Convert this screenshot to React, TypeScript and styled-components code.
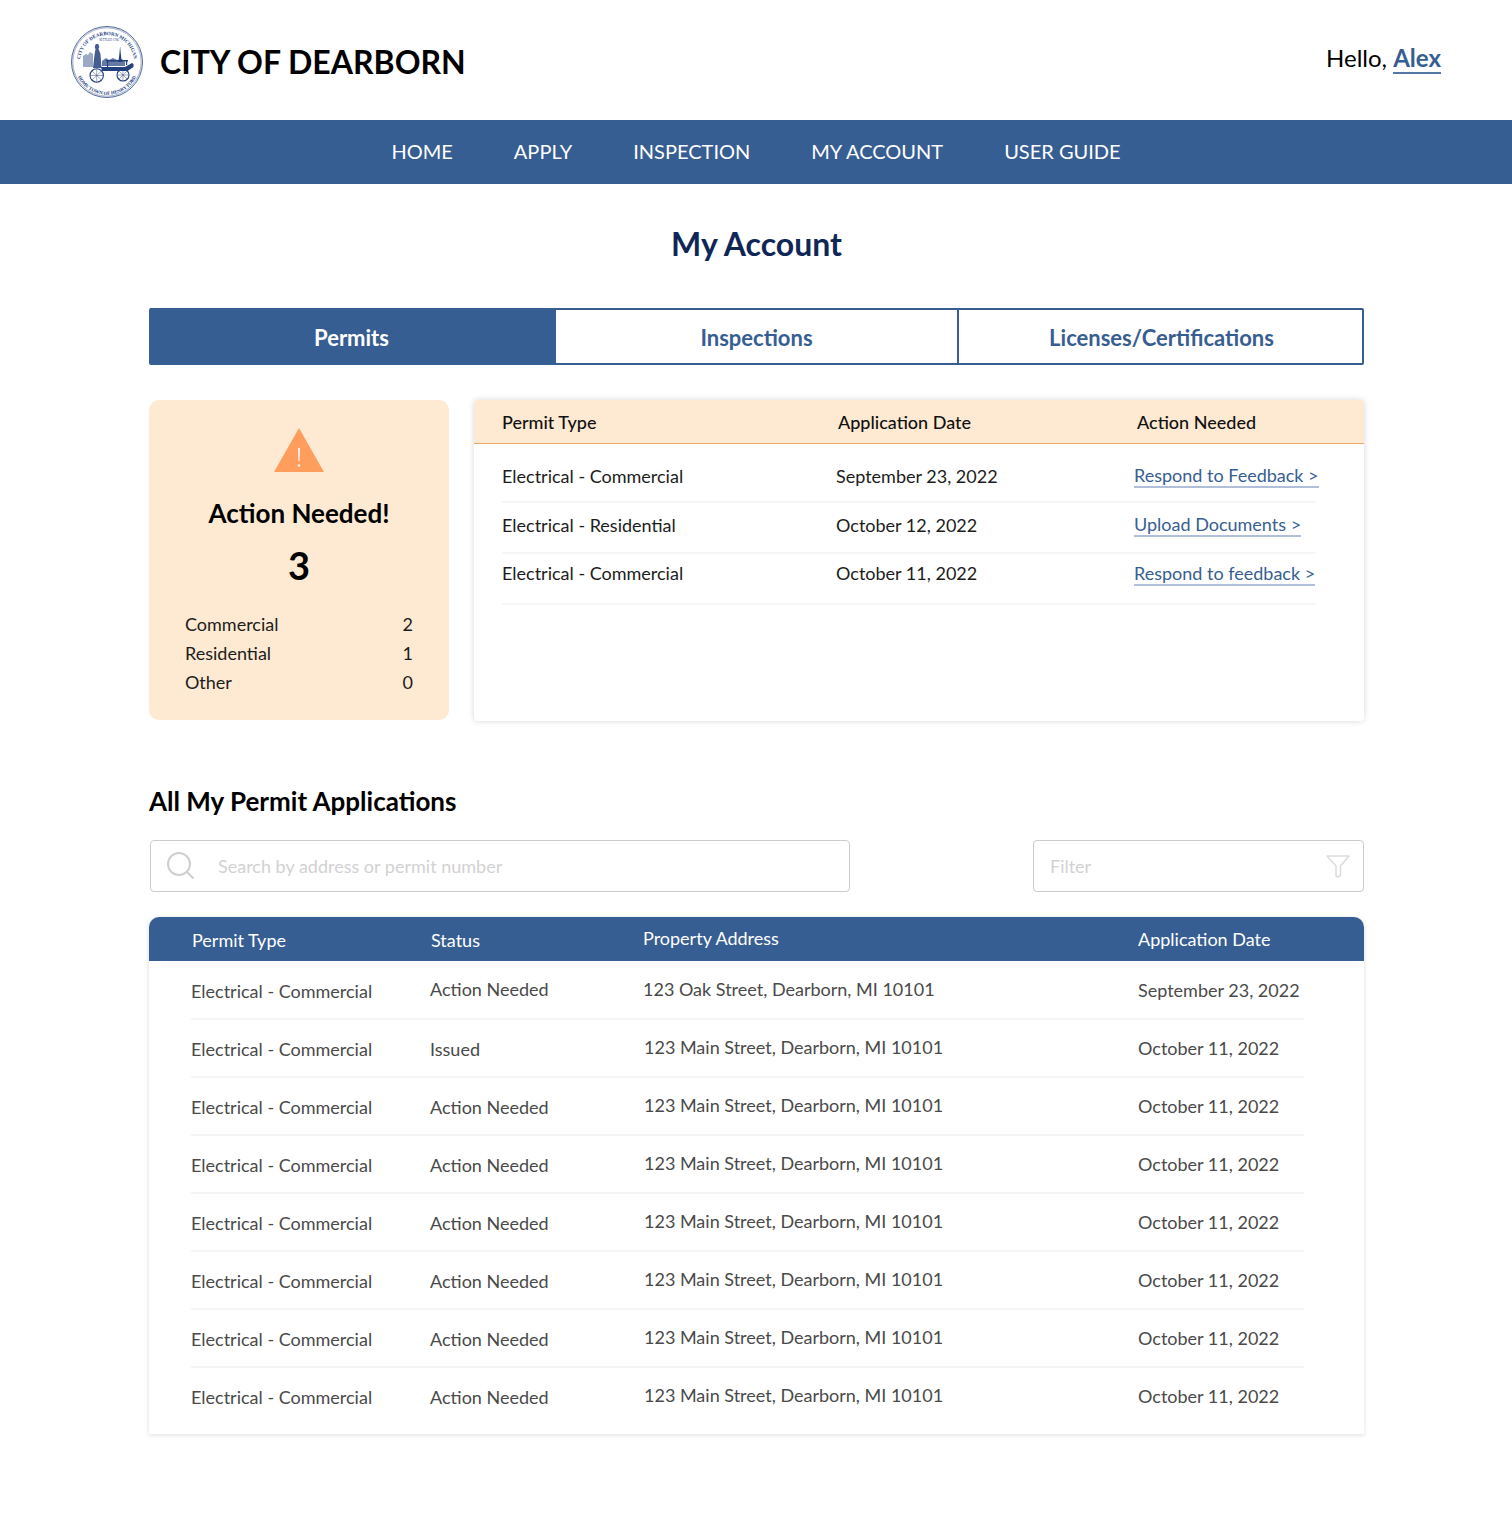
import React from 'react';
import styled, { createGlobalStyle } from 'styled-components';

const Global = createGlobalStyle`
  html, body { margin: 0; padding: 0; background: #fff; }
  body { font-family: Lato, "Open Sans", sans-serif; color: #000; }
  * { box-sizing: border-box; }
`;

const Page = styled.div`
  width: 1512px;
  height: 1524px;
  background: #fff;
`;

const Header = styled.header`
  height: 120px;
  display: flex;
  align-items: flex-start;
  justify-content: space-between;
  padding: 26px 71px 0 71px;
`;

const Brand = styled.div`
  display: flex;
  align-items: center;
  gap: 17px;
`;

const BrandName = styled.div`
  font-size: 32px;
  font-weight: 700;
  line-height: 72px;
  color: #000;
`;

const Hello = styled.div`
  font-size: 24px;
  line-height: 32px;
  padding-top: 16px;
  color: #000;
`;

const UserLink = styled.a`
  color: #375e92;
  font-weight: 700;
  border-bottom: 2px solid #5577a6;
`;

const Nav = styled.nav`
  height: 64px;
  background: #375e92;
  display: flex;
  align-items: center;
  justify-content: center;
  gap: 61px;
  padding-bottom: 2px;
`;

const NavItem = styled.a`
  color: #fff;
  font-size: 20px;
  line-height: 62px;
`;

const Main = styled.main`
  width: 1215px;
  margin-left: 149px;
`;

const Title = styled.h1`
  margin: 0;
  padding-top: 40px;
  height: 124px;
  font-size: 32px;
  line-height: 40px;
  font-weight: 700;
  color: #0f2757;
  text-align: center;
`;

const Tabs = styled.div`
  display: grid;
  grid-template-columns: 405px 401px 405px;
  height: 57px;
  border: 2px solid #375e92;
  border-radius: 2px;
`;

const Tab = styled.div<{ $active?: boolean; $divided?: boolean }>`
  display: flex;
  align-items: center;
  justify-content: center;
  padding-top: 2px;
  padding-right: ${p => (p.$active ? '4px' : '0')};
  padding-left: ${p => (p.$divided ? '2px' : '0')};
  font-size: 22px;
  font-weight: 700;
  color: ${p => (p.$active ? '#fff' : '#375e92')};
  background: ${p => (p.$active ? '#375e92' : '#fff')};
  border-left: ${p => (p.$divided ? '2px solid #375e92' : '0')};
`;

const Summary = styled.section`
  display: flex;
  gap: 25px;
  margin-top: 35px;
  height: 321px;
`;

const ActionCard = styled.div`
  width: 300px;
  height: 320px;
  background: #feead2;
  border-radius: 10px;
  padding: 28px 36px 0;
  display: flex;
  flex-direction: column;
`;

const Warning = styled.svg`
  display: block;
  align-self: center;
  width: 52px;
  height: 46px;
  margin-bottom: 22px;
`;

const ActionTitle = styled.div`
  font-size: 26px;
  line-height: 34px;
  font-weight: 700;
  text-align: center;
`;

const ActionCount = styled.div`
  font-size: 38px;
  line-height: 46px;
  font-weight: 700;
  text-align: center;
  margin: 12px 0 22px;
`;

const CountRow = styled.div`
  display: flex;
  justify-content: space-between;
  font-size: 18px;
  line-height: 29px;
  color: #1c1c1c;
`;

const ActionPanel = styled.div`
  width: 890px;
  height: 321px;
  background: #fff;
  border-radius: 4px;
  box-shadow: 0 0 6px rgba(0, 0, 0, 0.16);
`;

const ActionHead = styled.div`
  display: grid;
  grid-template-columns: 336px 299px 1fr;
  height: 44px;
  align-items: center;
  padding-left: 28px;
  background: #feead2;
  border-bottom: 1px solid #f0a860;
  border-radius: 4px 4px 0 0;
  font-size: 18px;
  font-weight: 500;
  color: #111;
`;

const ActionRows = styled.div`
  padding: 8px 48px 0 28px;
`;

const ActionRow = styled.div`
  display: grid;
  grid-template-columns: 334px 298px 1fr;
  align-items: center;
  height: 51px;
  border-bottom: 2px solid #f6f6f6;
  font-size: 18px;
  color: #1c1c1c;
`;

const ActionCell = styled.div<{ $lift: number }>`
  padding-bottom: ${p => p.$lift}px;
`;

const ActionLink = styled.a<{ $lift: number }>`
  justify-self: start;
  white-space: nowrap;
  margin-bottom: ${p => p.$lift}px;
  color: #375e92;
  font-size: 18px;
  line-height: 22px;
  border-bottom: 2px solid #b1c0d8;
`;

const SectionTitle = styled.h2`
  margin: 63px 0 0;
  height: 56px;
  font-size: 26px;
  line-height: 34px;
  font-weight: 700;
  color: #000;
`;

const Controls = styled.div`
  display: flex;
  justify-content: space-between;
  padding-left: 1px;
`;

const Field = styled.div<{ $width: number }>`
  width: ${p => p.$width}px;
  height: 52px;
  display: flex;
  align-items: center;
  border: 1px solid #cbcbcb;
  border-radius: 4px;
  padding: 0 13px 0 16px;
  font-size: 18px;
  color: #d2d2d2;
`;

const FieldText = styled.span`
  flex: 1;
`;

const SearchIcon = styled.svg`
  width: 28px;
  height: 28px;
  margin-right: 23px;
`;

const FilterIcon = styled.svg`
  width: 24px;
  height: 24px;
`;

const Table = styled.section`
  margin-top: 25px;
  height: 517px;
  background: #fff;
  border-radius: 10px 10px 0 0;
  box-shadow: 0 1px 5px rgba(0, 0, 0, 0.14);
`;

const TableHead = styled.div`
  display: grid;
  grid-template-columns: 239px 212px 495px 1fr;
  height: 44px;
  align-items: center;
  padding: 2px 0 0 43px;
  background: #375e92;
  color: #fff;
  border-radius: 10px 10px 0 0;
  font-size: 18px;
`;

const HeadCell = styled.div<{ $lift?: number }>`
  padding-bottom: ${p => p.$lift ?? 0}px;
`;

const TableBody = styled.div`
  padding-top: 1px;
`;

const TableRow = styled.div<{ $last?: boolean }>`
  display: grid;
  grid-template-columns: 239px 213px 494px 1fr;
  align-items: center;
  height: 58px;
  padding-top: 2px;
  margin: 0 60px 0 42px;
  border-bottom: 2px solid ${p => (p.$last ? 'transparent' : '#f5f5f5')};
  font-size: 18px;
  color: #4a4a4a;
`;

const Cell = styled.div<{ $lift?: number; $inset?: number }>`
  padding-bottom: ${p => p.$lift ?? 0}px;
  margin-left: ${p => p.$inset ?? 0}px;
`;

const Seal = () => (
  <svg width="72" height="72" viewBox="0 0 72 72" role="img" aria-label="City of Dearborn seal">
    <defs>
      <path id="sealTop" d="M9.900 43A27 27 0 1 1 62.100 43" />
      <path id="sealBottom" d="M3.700 41.700A32.800 32.800 0 0 0 68.300 41.700" />
    </defs>
    <circle cx="36" cy="36" r="35.500" fill="none" stroke="#23407f" strokeWidth="0.8" />
    <circle cx="36" cy="36" r="34.200" fill="none" stroke="#23407f" strokeWidth="0.4" />
    <text fontFamily="Liberation Serif, serif" fontSize="5" fontWeight="700" fill="#23407f">
      <textPath href="#sealTop" startOffset="50%" textAnchor="middle">CITY OF DEARBORN MICHIGAN</textPath>
    </text>
    <text fontFamily="Liberation Serif, serif" fontSize="4.800" fontWeight="700" fill="#23407f">
      <textPath href="#sealBottom" startOffset="50%" textAnchor="middle">HOME TOWN OF HENRY FORD</textPath>
    </text>
    <text x="38" y="14.500" textAnchor="middle" fontFamily="Liberation Serif, serif" fontSize="3" fill="#23407f">SETTLED 1786</text>
    <g fill="#23407f">
      <path d="M12 41V30l3-2 2 1 2-3 3 2v13z" opacity=".45" />
      <path d="M22 42l1.500-13 1-6-.8-2 1-3h2.600l1 3-.8 2 2 5 1 14z" opacity=".85" />
      <path d="M47.500 36l1-9 .6-7 .6 7 1 9z" />
      <path d="M31 35l4-3 3 2 4-2 4 2 5-1 3 3v4H31z" opacity=".7" />
      <path d="M30 41h24l7-4 1.500 1v3l-6 4H31z" />
      <path d="M35 34h22v1.500H35z" />
      <path d="M36 35h1.200v7H36zM55 35h1.200v4H55z" />
    </g>
    <g fill="none" stroke="#23407f" strokeWidth="1.100">
      <circle cx="25.700" cy="49.500" r="6.700" />
      <circle cx="52" cy="49" r="6" />
    </g>
    <g stroke="#23407f" strokeWidth="0.450">
      <path d="M25.700 43v13M19 49.500h13M21 45l9.500 9M30.500 45L21 54M52 43v12M46 49h12M48 45l8 8M56 45l-8 8" />
    </g>
  </svg>
);

const navItems = ['HOME', 'APPLY', 'INSPECTION', 'MY ACCOUNT', 'USER GUIDE'];

const actionRows = [
  { type: 'Electrical - Commercial', date: 'September 23, 2022', link: 'Respond to Feedback >', lift: 2, linkLift: 1 },
  { type: 'Electrical - Residential', date: 'October 12, 2022', link: 'Upload Documents >', lift: 6, linkLift: 5 },
  { type: 'Electrical - Commercial', date: 'October 11, 2022', link: 'Respond to feedback >', lift: 12, linkLift: 9 },
];

const counts: [string, number][] = [
  ['Commercial', 2],
  ['Residential', 1],
  ['Other', 0],
];

const permits = [
  { status: 'Action Needed', address: '123 Oak Street, Dearborn, MI 10101', date: 'September 23, 2022' },
  { status: 'Issued', address: '123 Main Street, Dearborn, MI 10101', date: 'October 11, 2022' },
  ...Array.from({ length: 6 }, () => ({
    status: 'Action Needed',
    address: '123 Main Street, Dearborn, MI 10101',
    date: 'October 11, 2022',
  })),
];

export default function App() {
  return (
    <Page>
      <Global />
      <Header>
        <Brand>
          <Seal />
          <BrandName>CITY OF DEARBORN</BrandName>
        </Brand>
        <Hello>
          Hello, <UserLink>Alex</UserLink>
        </Hello>
      </Header>
      <Nav>
        {navItems.map(item => (
          <NavItem key={item}>{item}</NavItem>
        ))}
      </Nav>
      <Main>
        <Title>My Account</Title>
        <Tabs>
          <Tab $active>Permits</Tab>
          <Tab>Inspections</Tab>
          <Tab $divided>Licenses/Certifications</Tab>
        </Tabs>
        <Summary>
          <ActionCard>
            <Warning viewBox="0 0 52 46">
              <path d="M26 0 L51 44 H1 Z" fill="#ff9d5c" />
              <path d="M25 20h2l-.4 13h-1.200z" fill="#fff" opacity=".9" />
              <circle cx="26" cy="37.500" r="1.300" fill="#fff" opacity=".9" />
            </Warning>
            <ActionTitle>Action Needed!</ActionTitle>
            <ActionCount>3</ActionCount>
            {counts.map(([label, value]) => (
              <CountRow key={label}>
                <span>{label}</span>
                <span>{value}</span>
              </CountRow>
            ))}
          </ActionCard>
          <ActionPanel>
            <ActionHead>
              <div>Permit Type</div>
              <div>Application Date</div>
              <div>Action Needed</div>
            </ActionHead>
            <ActionRows>
              {actionRows.map(row => (
                <ActionRow key={row.date}>
                  <ActionCell $lift={row.lift}>{row.type}</ActionCell>
                  <ActionCell $lift={row.lift}>{row.date}</ActionCell>
                  <ActionLink $lift={row.linkLift}>{row.link}</ActionLink>
                </ActionRow>
              ))}
            </ActionRows>
          </ActionPanel>
        </Summary>
        <SectionTitle>All My Permit Applications</SectionTitle>
        <Controls>
          <Field $width={700}>
            <SearchIcon viewBox="0 0 28 28" fill="none" stroke="#cfcfcf" strokeWidth="2">
              <circle cx="12" cy="12" r="11" />
              <path d="M20 20l6.500 6.500" />
            </SearchIcon>
            <FieldText>Search by address or permit number</FieldText>
          </Field>
          <Field $width={331}>
            <FieldText>Filter</FieldText>
            <FilterIcon viewBox="0 0 24 24" fill="none" stroke="#dcdcdc" strokeWidth="1.5" strokeLinejoin="round">
              <path d="M1 2h22l-8.500 10v9.500l-2.500 1.500-2-1V12z" />
            </FilterIcon>
          </Field>
        </Controls>
        <Table>
          <TableHead>
            <HeadCell>Permit Type</HeadCell>
            <HeadCell>Status</HeadCell>
            <HeadCell $lift={4}>Property Address</HeadCell>
            <HeadCell $lift={2}>Application Date</HeadCell>
          </TableHead>
          <TableBody>
            {permits.map((row, i) => (
              <TableRow key={i} $last={i === permits.length - 1}>
                <Cell>Electrical - Commercial</Cell>
                <Cell $lift={i === 0 ? 4 : 0}>{row.status}</Cell>
                <Cell $lift={4} $inset={i === 0 ? 0 : 1}>{row.address}</Cell>
                <Cell $lift={2} $inset={1}>{row.date}</Cell>
              </TableRow>
            ))}
          </TableBody>
        </Table>
      </Main>
    </Page>
  );
}
